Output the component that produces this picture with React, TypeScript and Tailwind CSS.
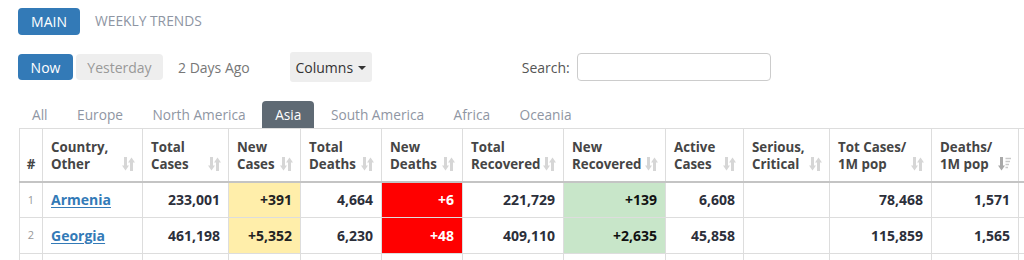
import React from "react";

const SortIcon = ({ desc = false }: { desc?: boolean }) =>
  desc ? (
    <svg width="13" height="14" viewBox="0 0 13 14" className="shrink-0">
      <path d="M3.5 0v9" stroke="#a9a9a9" strokeWidth="3" />
      <path d="M0 8.5l3.5 5 3.5-5z" fill="#a9a9a9" />
      <path d="M7.5 1.5h5.5M7.5 4.5h4.5M7.5 7.5h3.5M7.5 10.5h2.5" stroke="#c9c9c9" strokeWidth="1.6" />
    </svg>
  ) : (
    <svg width="13" height="14" viewBox="0 0 13 14" className="shrink-0">
      <path d="M3.5 0v9" stroke="#d6d6d6" strokeWidth="3" />
      <path d="M0 8.5l3.5 5 3.5-5z" fill="#d6d6d6" />
      <path d="M9.5 5v9" stroke="#d6d6d6" strokeWidth="3" />
      <path d="M6 5.5l3.5-5 3.5 5z" fill="#d6d6d6" />
    </svg>
  );

type Col = { l1: string; l2: string; w: number; desc?: boolean };
const cols: Col[] = [
  { l1: "Country,", l2: "Other", w: 100 },
  { l1: "Total", l2: "Cases", w: 86 },
  { l1: "New", l2: "Cases", w: 72 },
  { l1: "Total", l2: "Deaths", w: 81 },
  { l1: "New", l2: "Deaths", w: 81 },
  { l1: "Total", l2: "Recovered", w: 101 },
  { l1: "New", l2: "Recovered", w: 102 },
  { l1: "Active", l2: "Cases", w: 78 },
  { l1: "Serious,", l2: "Critical", w: 86 },
  { l1: "Tot Cases/", l2: "1M pop", w: 102 },
  { l1: "Deaths/", l2: "1M pop", w: 87, desc: true },
];

type Row = {
  n: number | string;
  country: string;
  vals: string[];
};
const rows: Row[] = [
  { n: 1, country: "Armenia", vals: ["233,001", "+391", "4,664", "+6", "221,729", "+139", "6,608", "", "78,468", "1,571"] },
  { n: 2, country: "Georgia", vals: ["461,198", "+5,352", "6,230", "+48", "409,110", "+2,635", "45,858", "", "115,859", "1,565"] },
  { n: "", country: "", vals: ["", "", "", "", "", "", "", "", "", ""] },
];

export default function App() {
  return (
    <div className="w-[1024px] h-[260px] overflow-hidden bg-white font-['Open_Sans','Noto_Sans',sans-serif] text-[14px]">
      <div className="pl-[18px] pt-[8px]">
        <div className="flex items-center h-[27px]">
          <div className="h-[27px] w-[62px] rounded-[4px] bg-[#337ab7] text-white flex items-center justify-center">MAIN</div>
          <div className="ml-[15px] text-[#8e95a3] text-[13.8px]">WEEKLY TRENDS</div>
        </div>
        <div className="flex items-center mt-[17px] h-[30px]">
          <div className="h-[26px] w-[55px] rounded-[4px] bg-[#337ab7] text-white flex items-center justify-center">Now</div>
          <div className="ml-[3px] h-[26px] w-[87px] rounded-[4px] bg-[#eeeeee] text-[#999] flex items-center justify-center">Yesterday</div>
          <div className="ml-[15px] text-[#777]">2 Days Ago</div>
          <div className="ml-[40px] h-[30px] w-[82px] rounded-[3px] bg-[#eeeeee] text-[#333] flex items-center justify-center gap-[5px]">
            Columns
            <span className="inline-block w-0 h-0 border-l-[4px] border-r-[4px] border-t-[4px] border-l-transparent border-r-transparent border-t-[#333] mt-[2px]" />
          </div>
          <div className="ml-[150px] text-[#555]">Search:</div>
          <div className="ml-[7px] h-[28px] w-[194px] rounded-[4px] border border-[#ccc]" />
        </div>
        <div className="flex items-end mt-[19px] h-[27px] pl-px text-[#8f96a3] text-[13.7px]">
          {["All", "Europe", "North America", "Asia", "South America", "Africa", "Oceania"].map((t) =>
            t === "Asia" ? (
              <div key={t} className="h-[27px] px-[13px] pt-[2px] mr-[3.5px] rounded-t-[4px] bg-[#5f6a74] text-white flex items-center">{t}</div>
            ) : (
              <div key={t} className="h-[27px] px-[13px] pt-[2px] mr-[3.5px] flex items-center">{t}</div>
            )
          )}
        </div>
        <table className="ml-px table-fixed border-collapse w-[1099px]">
          <colgroup>
            <col className="w-[23px]" />
            {cols.map((c, i) => (
              <col key={i} style={{ width: c.w }} />
            ))}
            <col className="w-[100px]" />
          </colgroup>
          <thead>
            <tr className="h-[53px]">
              <th className="border border-[#ddd] border-b-2 border-b-[#c4c4c4] align-bottom pb-[8px] text-[#454545] font-bold text-[13.3px] leading-[17px] text-center">#</th>
              {cols.map((c, i) => (
                <th key={i} className="border border-[#ddd] border-b-2 border-b-[#c4c4c4] align-bottom pb-[8px] pl-[8px] pr-[7px] text-left text-[#454545] font-bold text-[13.3px] leading-[17px]">
                  <div className="flex items-end justify-between">
                    <div className="whitespace-nowrap">
                      <div>{c.l1}</div>
                      <div>{c.l2}</div>
                    </div>
                    <div className="pb-[2px]">
                      <SortIcon desc={c.desc} />
                    </div>
                  </div>
                </th>
              ))}
              <th className="border border-[#ddd] border-b-2 border-b-[#c4c4c4]" />
            </tr>
          </thead>
          <tbody>
            {rows.map((r, ri) => (
              <tr key={ri} className="h-[36px]">
                <td className="border border-[#ddd] text-center text-[11px] text-[#999]">{r.n}</td>
                <td className="border border-[#ddd] pl-[8px] font-bold">
                  {r.country && (
                    <a className="text-[#337ab7] underline underline-offset-[2px]" href="#">{r.country}</a>
                  )}
                </td>
                {r.vals.map((v, i) => {
                  let bg = "";
                  if (i === 1 && v) bg = "bg-[#ffeeaa] text-[#222]";
                  else if (i === 3 && v) bg = "bg-[#ff0000] text-white";
                  else if (i === 5 && v) bg = "bg-[#c8e6c9] text-[#111]";
                  else bg = "text-[#2c2f3a]";
                  return (
                    <td key={i} className={`border border-[#ddd] text-right pr-[8px] font-bold ${bg}`}>{v}</td>
                  );
                })}
                <td className="border border-[#ddd]" />
              </tr>
            ))}
          </tbody>
        </table>
      </div>
    </div>
  );
}
